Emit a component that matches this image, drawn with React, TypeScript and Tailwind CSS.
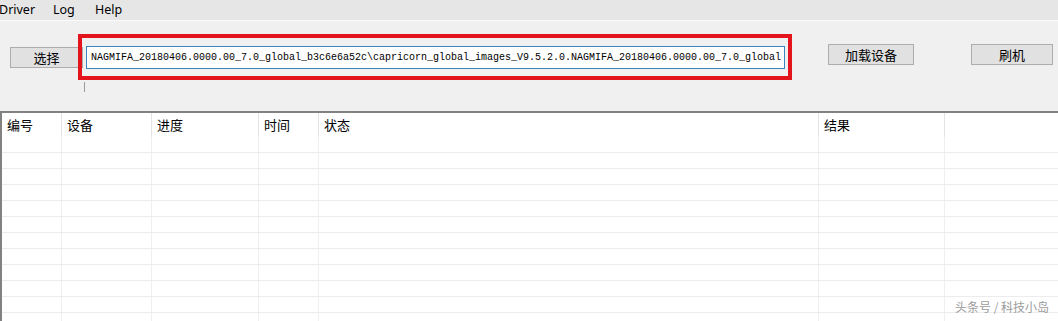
import React from "react";

const cols = [
  { w: "w-[60px]", label: "编号" },
  { w: "w-[90px]", label: "设备" },
  { w: "w-[107px]", label: "进度" },
  { w: "w-[60px]", label: "时间" },
  { w: "w-[500px]", label: "状态" },
  { w: "w-[126px]", label: "结果" },
  { w: "flex-1", label: "" },
];

const cjk = "font-['SimSun','Noto_Sans_CJK_SC',sans-serif]";

export default function App() {
  const rows = Array.from({ length: 12 });
  return (
    <div className="w-[1058px] h-[321px] overflow-hidden bg-[#f0f0f0] flex flex-col relative font-['Noto_Sans','Noto_Sans_CJK_SC',sans-serif]">
      {/* Menu bar */}
      <div className="h-[21px] bg-[#e6e6e6] flex items-center text-[12.5px] text-black border-b border-[#fbfbfb] shrink-0">
        <span className="ml-[-1px] w-[54px]">Driver</span>
        <span className="w-[42px]">Log</span>
        <span>Help</span>
      </div>
      {/* Toolbar */}
      <div className="h-[90px] relative flex items-start pl-[10px] shrink-0">
        <button className={`mt-[26px] w-[73px] h-[21px] bg-[#e1e1e1] border border-[#adadad] text-[13px] leading-none flex items-center justify-center ${cjk}`}>
          选择
        </button>
        <div className="ml-[3px] mt-[25px] w-[699px] h-[23px] bg-white border border-[#3a86c0] flex items-center pl-[4px] overflow-hidden">
          <span className="font-['Liberation_Mono',monospace] text-[10px] text-black whitespace-nowrap tracking-[0px]">
            NAGMIFA_20180406.0000.00_7.0_global_b3c6e6a52c\capricorn_global_images_V9.5.2.0.NAGMIFA_20180406.0000.00_7.0_global
          </span>
        </div>
        <button className={`ml-[43px] mt-[23px] w-[86px] h-[21px] bg-[#e1e1e1] border border-[#adadad] text-[13px] leading-none flex items-center justify-center ${cjk}`}>
          加载设备
        </button>
        <button className={`ml-[57px] mt-[23px] w-[82px] h-[21px] bg-[#e1e1e1] border border-[#adadad] text-[13px] leading-none flex items-center justify-center ${cjk}`}>
          刷机
        </button>
        {/* annotation overlay */}
        <div className="absolute left-[78px] top-[13px] w-[714px] h-[46px] border-[4px] border-[#e3141b] pointer-events-none" />
        <div className="absolute left-[84px] top-[61px] w-px h-[10px] bg-[#9a9a9a]" />
      </div>
      {/* Table */}
      <div className="flex-1 bg-white border-t-2 border-l-2 border-[#828282] flex flex-col overflow-hidden">
        <div className="flex h-[24px] shrink-0">
          {cols.map((c, i) => (
            <div
              key={i}
              className={`${c.w} shrink-0 h-full ${i < 6 ? "border-r border-[#e3e3e3]" : ""} pl-[5px] flex items-center text-[13px] text-black ${cjk}`}
            >
              {c.label}
            </div>
          ))}
        </div>
        {rows.map((_, r) => (
          <div key={r} className="flex shrink-0 border-b border-[#ececec] h-[16px]">
            {cols.map((c, i) => (
              <div key={i} className={`${c.w} shrink-0 h-full ${i < 6 ? "border-r border-[#efefef]" : ""}`} />
            ))}
          </div>
        ))}
      </div>
      <div className={`absolute left-[955px] top-[298px] text-[12px] text-[#9c9c9c] whitespace-nowrap ${cjk}`}>
        头条号 / 科技小岛
      </div>
    </div>
  );
}
